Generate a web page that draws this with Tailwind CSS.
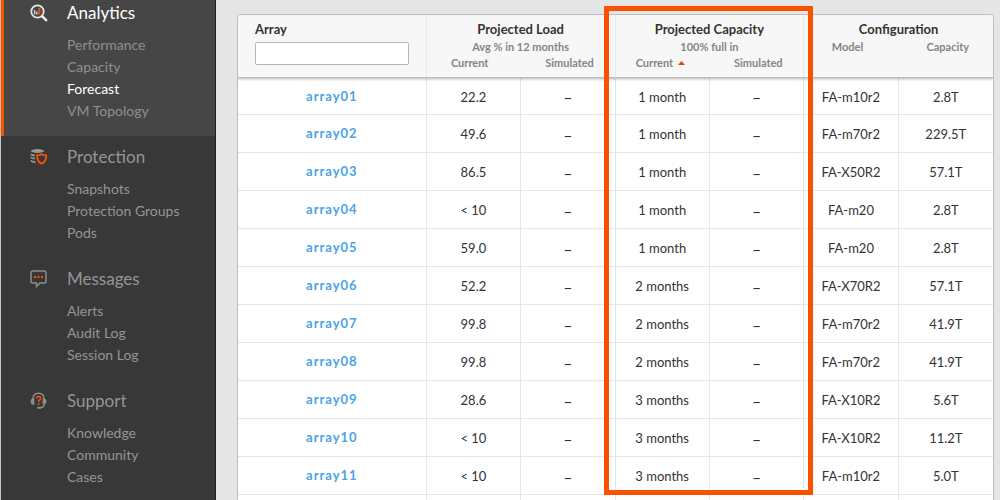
<!DOCTYPE html>
<html lang="en">
<head>
<meta charset="utf-8">
<title>Analytics – Forecast</title>
<script src="https://cdn.jsdelivr.net/npm/@tailwindcss/browser@4"></script>
</head>
<body class="flex h-screen overflow-hidden bg-[#e5e5e5] font-['Lato','Liberation_Sans',sans-serif] text-sm text-[#333]">
<nav aria-label="Main" class="w-[216px] shrink-0 overflow-hidden border-l border-r border-l-[#c4c4c4] border-r-[#222] bg-[#383838] text-[#959595]">
  <section class="relative bg-[#464646] pb-[14px]">
    <div class="absolute inset-y-0 left-0 w-[3px] bg-[#fa5000]"></div>
    <h2 class="flex h-[26px] items-center text-[17px] text-white">
      <span class="w-[66px] pl-[29px]"><svg class="size-[18px]" viewBox="0 0 18 18" fill="none"><circle cx="7.5" cy="7.5" r="6.2" stroke="#e8e8e8" stroke-width="1.8"/><path d="M12.3 12.3l3.8 3.8" stroke="#f2f2f2" stroke-width="2.6" stroke-linecap="round"/><path d="M4.6 6v4.5M6.8 7.5v3" stroke="#ccc" stroke-width="1.5"/><path d="M9.4 4v6.5" stroke="#fa5000" stroke-width="2"/></svg></span>
      <a href="#analytics">Analytics</a>
    </h2>
    <ul class="mt-2 pl-[66px] leading-[22px] text-[#8f8f8f]">
      <li><a href="#performance">Performance</a></li>
      <li><a href="#capacity">Capacity</a></li>
      <li><a href="#forecast" aria-current="page" class="text-white">Forecast</a></li>
      <li><a href="#topology">VM Topology</a></li>
    </ul>
  </section>
  <section class="pt-2 pb-[14px]">
    <h2 class="flex h-[26px] items-center text-[17px]">
      <span class="w-[66px] pl-[29px]"><svg class="size-[18px]" viewBox="0 0 18 18" fill="none"><ellipse cx="7.5" cy="3" rx="6.5" ry="1.9" fill="#999"/><path d="M.8 6.2q1.6 1.2 4 1.3M.8 9.4q1.600 1.200 4 1.300M.8 12.600q1.600 1.500 4.800 1.600" stroke="#999" stroke-width="1.800"/><path d="M11.600 6.200c1.400 1 2.800 1.200 4.600 1.200 0 4.200-1.500 6.800-4.600 8.200-3.100-1.400-4.600-4-4.600-8.200 1.800 0 3.200-.2 4.600-1.200z" stroke="#fa5000" stroke-width="1.900"/></svg></span>
      <a href="#protection">Protection</a>
    </h2>
    <ul class="mt-2 pl-[66px] leading-[22px]">
      <li><a href="#snapshots">Snapshots</a></li>
      <li><a href="#groups">Protection Groups</a></li>
      <li><a href="#pods">Pods</a></li>
    </ul>
  </section>
  <section class="pt-2 pb-[14px]">
    <h2 class="flex h-[26px] items-center text-[17px]">
      <span class="w-[66px] pl-[29px]"><svg class="size-[18px]" viewBox="0 0 18 18" fill="none"><path d="M2.500 1h12q1.500 0 1.500 1.500v9q0 1.500-1.500 1.500H10l-3.500 3.500V13h-4Q1 13 1 11.500v-9Q1 1 2.500 1z" stroke="#8d8d8d" stroke-width="1.500"/><path d="M4 6h2v2H4zM7.500 6h2v2h-2zM11 6h2v2h-2z" fill="#fa5000"/></svg></span>
      <a href="#messages">Messages</a>
    </h2>
    <ul class="mt-2 pl-[66px] leading-[22px]">
      <li><a href="#alerts">Alerts</a></li>
      <li><a href="#audit">Audit Log</a></li>
      <li><a href="#session">Session Log</a></li>
    </ul>
  </section>
  <section class="pt-2 pb-[14px]">
    <h2 class="flex h-[26px] items-center text-[17px]">
      <span class="w-[66px] pl-[29px]"><svg class="size-[18px]" viewBox="0 0 18 18" fill="none"><path d="M2.800 7.500C2.800 3.500 5 1.200 8.500 1.200s5.700 2.300 5.700 6.300M14.200 12.500c0 2-1.500 3-4 3.300" stroke="#8d8d8d" stroke-width="1.400"/><path d="M4.300 6.200v6.600H3.200Q.6 12.400.6 9.500t2.600-3.300zM12.700 6.200v6.600h1.100q2.600-.4 2.600-3.300t-2.600-3.300zM7 14.800h4v2H7.600z" fill="#8d8d8d"/><path d="M6.600 6.300q0-1.700 2-1.700t2 1.800q0 1.200-1.900 2.100v1.700M8.700 11.300v1.600" stroke="#fa5000" stroke-width="1.500"/></svg></span>
      <a href="#support">Support</a>
    </h2>
    <ul class="mt-2 pl-[66px] leading-[22px]">
      <li><a href="#knowledge">Knowledge</a></li>
      <li><a href="#community">Community</a></li>
      <li><a href="#cases">Cases</a></li>
    </ul>
  </section>
</nav>

<main class="min-w-0 flex-1 overflow-hidden pt-[14px] pr-[6px] pl-[21px]">
  <div class="relative">
    <div class="overflow-hidden rounded-t-[4px] border border-[#bdbdbd] bg-white">
      <table class="w-full table-fixed border-separate border-spacing-0 text-center text-[13px]">
        <colgroup><col class="w-1/4"><col><col><col><col><col><col></colgroup>
        <thead class="relative bg-[#f7f7f7] text-[11px] text-[#858585] shadow-[0_1px_3px_rgba(0,0,0,0.3)]">
          <tr class="h-[63px] align-top">
            <th scope="col" class="border-r border-b border-r-[#e8e8e8] border-b-[#bdbdbd] px-[17px] pt-[5px] text-left">
              <label for="filter" class="block text-[13px] leading-[18px] text-[#333]">Array</label>
              <input id="filter" type="text" class="mt-1 block h-[23px] w-[154px] max-w-full rounded-[2px] border border-[#b5b5b5] bg-white px-2 font-normal text-[#333]">
            </th>
            <th scope="colgroup" colspan="2" class="border-r border-b border-r-[#e8e8e8] border-b-[#bdbdbd] pt-[5px]">
              <div class="text-[13px] leading-[18px] text-[#333]">Projected Load</div>
              <div class="leading-[18px]">Avg % in 12 months</div>
              <div class="grid grid-cols-2 leading-[14px]"><span class="pr-2">Current</span><span class="pl-1">Simulated</span></div>
            </th>
            <th scope="colgroup" colspan="2" class="border-r border-b border-r-[#e8e8e8] border-b-[#bdbdbd] pt-[5px]">
              <div class="text-[13px] leading-[18px] text-[#333]">Projected Capacity</div>
              <div class="leading-[18px]">100% full in</div>
              <div class="grid grid-cols-2 leading-[14px]"><button type="button" class="flex items-center justify-center gap-[5px] pr-1 font-bold">Current<svg class="h-1 w-[7px]" viewBox="0 0 7 4"><path d="M0 4L3.500 0 7 4z" fill="#e8450a"/></svg></button><span class="pl-1">Simulated</span></div>
            </th>
            <th scope="colgroup" colspan="2" class="border-b border-[#bdbdbd] pt-[5px]">
              <div class="text-[13px] leading-[18px] text-[#333]">Configuration</div>
              <div class="grid grid-cols-2 leading-[18px]"><span class="pr-2">Model</span><span class="pl-1">Capacity</span></div>
            </th>
          </tr>
        </thead>
        <tbody id="rows" class="[&_td]:h-[38px] [&_td]:border-b [&_td]:border-r [&_td]:border-[#e6e6e6] [&_td]:pt-[2px] [&_td:first-child]:pt-0 [&_td:last-child]:border-r-0 [&_tr:first-child_td]:h-[37px]"></tbody>
      </table>
    </div>
    <div class="pointer-events-none absolute -top-2 left-[48.5%] h-[489px] w-[27.6%] border-[5px] border-[#fa5000]"></div>
  </div>
</main>
<script>
const data = [
  ["array01","22.2","1 month","FA-m10r2","2.8T"],
  ["array02","49.6","1 month","FA-m70r2","229.5T"],
  ["array03","86.5","1 month","FA-X50R2","57.1T"],
  ["array04","< 10","1 month","FA-m20","2.8T"],
  ["array05","59.0","1 month","FA-m20","2.8T"],
  ["array06","52.2","2 months","FA-X70R2","57.1T"],
  ["array07","99.8","2 months","FA-m70r2","41.9T"],
  ["array08","99.8","2 months","FA-m70r2","41.9T"],
  ["array09","28.6","3 months","FA-X10R2","5.6T"],
  ["array10","< 10","3 months","FA-X10R2","11.2T"],
  ["array11","< 10","3 months","FA-m10r2","5.0T"],
];
const esc = s => s.replace("<", "&lt;");
const dash = `<td class="text-base leading-none">–</td>`;
document.getElementById("rows").innerHTML = data.map(([name, load, months, model, cap]) =>
  `<tr><td><a href="#${name}" class="font-bold tracking-[1px] text-[#4aa3e6]">${name}</a></td><td>${esc(load)}</td>${dash}<td>${months}</td>${dash}<td>${model}</td><td>${cap}</td></tr>`
).join("") + "<tr>" + "<td></td>".repeat(7) + "</tr>";
</script>
</body>
</html>
